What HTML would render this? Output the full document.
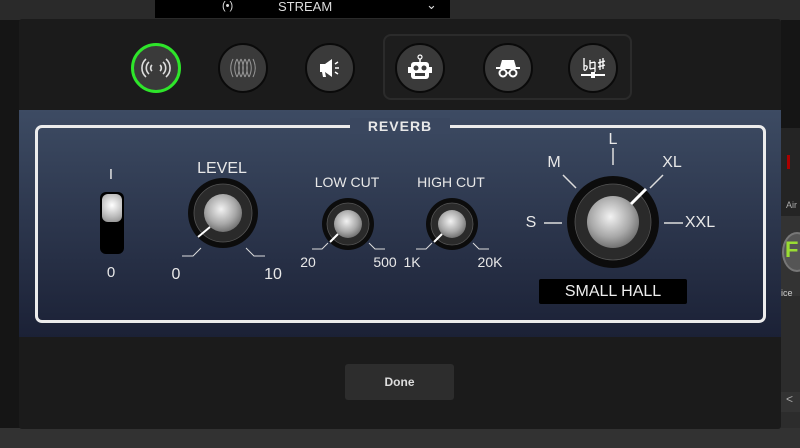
<!DOCTYPE html>
<html><head><meta charset="utf-8"><style>
*{margin:0;padding:0;box-sizing:border-box}
body{width:800px;height:448px;overflow:hidden;background:#2c2c2c;font-family:"Liberation Sans",sans-serif;position:relative}
.a{position:absolute}
.t{position:absolute;color:#e8e8e8;font-size:15px;transform:translateX(-50%);white-space:nowrap}
.btn{position:absolute;width:50px;height:50px;border-radius:50%;background:#3a3a3a;border:2px solid #0a0a0a;transform:translate(-50%,-50%);display:flex;align-items:center;justify-content:center}
</style></head><body>
<div class="a" style="left:0;top:0;width:800px;height:20px;background:#2a2a2a"></div>
<div class="a" style="left:0;top:20px;width:20px;height:410px;background:#151515"></div>
<div class="a" style="left:0;top:428px;width:800px;height:20px;background:#323232"></div>
<div class="a" style="left:155px;top:0;width:295px;height:18px;background:#000"></div>
<div class="a" style="left:222px;top:0;color:#ddd;font-size:11px">(•)</div>
<div class="a" style="left:278px;top:-1px;color:#ddd;font-size:13px">STREAM</div>
<div class="a" style="left:426px;top:-3px;color:#ddd;font-size:13px">⌄</div>
<div class="a" style="left:781px;top:20px;width:19px;height:108px;background:#151515"></div>
<div class="a" style="left:781px;top:128px;width:19px;height:88px;background:#242424"></div>
<div class="a" style="left:787px;top:155px;width:3px;height:14px;background:#a00"></div>
<div class="a" style="left:786px;top:200px;color:#aaa;font-size:9px">Air</div>
<div class="a" style="left:781px;top:216px;width:19px;height:80px;background:#333"></div>
<div class="a" style="left:782px;top:232px;width:30px;height:40px;border-radius:50%;background:#555;border:2px solid #777"></div>
<div class="a" style="left:785px;top:237px;color:#9d3;font-weight:bold;font-size:22px">F</div>
<div class="a" style="left:781px;top:288px;color:#ccc;font-size:9px">ice</div>
<div class="a" style="left:781px;top:392px;width:19px;height:20px;background:#333;color:#aaa;font-size:12px;padding-left:5px">&lt;</div>

<div class="a" style="left:19px;top:19px;width:762px;height:410px;background:#1b1b1b;border-radius:3px"></div>

<div class="a" style="left:383px;top:34px;width:249px;height:66px;border:2px solid #2b2b2b;border-radius:8px;background:#1d1d1d"></div>
<div class="btn" style="left:156px;top:68px;border:3px solid #2ee52a">
<svg width="30" height="24" viewBox="0 0 30 24" fill="none" stroke="#ddd" stroke-width="1.6"><path d="M11 9a4 4 0 0 0 0 6M19 9a4 4 0 0 1 0 6M8 6a8 8 0 0 0 0 12M22 6a8 8 0 0 1 0 12M5 3a12 12 0 0 0 0 18M25 3a12 12 0 0 1 0 18"/></svg></div>
<div class="btn" style="left:243px;top:68px">
<svg width="28" height="24" viewBox="0 0 28 24" fill="none" stroke="#999" stroke-width="1"><path d="M4 3c-3 6-3 12 0 18M8 3c-3 6-3 12 0 18M12 3c-3 6-3 12 0 18M16 3c-3 6-3 12 0 18M20 3c-3 6-3 12 0 18M8 3c3 6 3 12 0 18M12 3c3 6 3 12 0 18M16 3c3 6 3 12 0 18M20 3c3 6 3 12 0 18M24 3c3 6 3 12 0 18"/></svg></div>
<div class="btn" style="left:330px;top:68px">
<svg width="26" height="24" viewBox="0 0 26 24"><path d="M3 8h5l7-5v18l-7-5H3z M5 16h3l1 5H6z" fill="#fff"/><path d="M18 8l3-2M18 12h4M18 16l3 2" stroke="#fff" stroke-width="1.5"/></svg></div>
<div class="btn" style="left:420px;top:68px">
<svg width="26" height="28" viewBox="0 0 26 28"><circle cx="13" cy="3" r="2" fill="none" stroke="#fff" stroke-width="1.2"/><path d="M13 5v3" stroke="#fff" stroke-width="1.5"/><rect x="4" y="8" width="18" height="17" rx="3" fill="#fff"/><rect x="1" y="13" width="3" height="6" fill="#fff"/><rect x="22" y="13" width="3" height="6" fill="#fff"/><circle cx="9" cy="14" r="2.5" fill="#3a3a3a"/><circle cx="17" cy="14" r="2.5" fill="#3a3a3a"/><rect x="8" y="19" width="10" height="3" fill="#3a3a3a"/></svg></div>
<div class="btn" style="left:508px;top:68px">
<svg width="28" height="20" viewBox="0 0 28 20"><path d="M8 2h12l2 7H6z" fill="#fff"/><rect x="2" y="9" width="24" height="2" fill="#fff"/><circle cx="9" cy="15" r="3.5" fill="none" stroke="#fff" stroke-width="2"/><circle cx="19" cy="15" r="3.5" fill="none" stroke="#fff" stroke-width="2"/><path d="M12 15h4" stroke="#fff" stroke-width="1.5"/></svg></div>
<div class="btn" style="left:593px;top:68px">
<svg width="28" height="24" viewBox="0 0 28 24" fill="none" stroke="#fff" stroke-width="1.3"><path d="M5 2v12M5 10q4-1 3 2t-3 2M11 4v9M16 6v10M11 13l5-1M11 7l5-1M21 3v11M24 2v11M19 7l7-2M19 11l7-2"/><path d="M2 19h24" stroke-width="2"/><rect x="12" y="16" width="4" height="6" fill="#fff" stroke="none"/></svg></div>

<div class="a" style="left:19px;top:110px;width:762px;height:227px;background:linear-gradient(#3d4b63,#1b2136)"></div>
<div class="a" style="left:35px;top:125px;width:731px;height:198px;border:3.5px solid #ececec;border-radius:7px"></div>
<div class="a" style="left:350px;top:118px;width:100px;height:16px;background:#3a475f"></div>
<div class="t" style="left:400px;top:118px;font-weight:bold;font-size:14px;letter-spacing:1px">REVERB</div>

<div class="t" style="left:111px;top:166px">I</div>
<div class="a" style="left:100px;top:192px;width:24px;height:62px;background:#000;border-radius:6px"></div>
<div class="a" style="left:102px;top:194px;width:20px;height:28px;border-radius:6px;background:radial-gradient(circle at 50% 40%,#fff,#bbb 60%,#888)"></div>
<div class="t" style="left:111px;top:264px">0</div>

<svg class="a" style="left:0;top:0" width="800" height="448">
<defs>
<radialGradient id="s" cx="45%" cy="40%" r="65%"><stop offset="0" stop-color="#f2f2f2"/><stop offset=".6" stop-color="#a8a8a8"/><stop offset="1" stop-color="#666"/></radialGradient>
</defs>
<g stroke="#ddd" stroke-width="1" fill="none">
<path d="M182 256h11l8-8M265 256h-11l-8-8"/>
<path d="M312 249h10l6-6M385 249h-10l-6-6"/>
<path d="M416 249h10l6-6M489 249h-10l-6-6"/>
<path d="M613 148v17M563 175l13 13M544 223h18M664 223h19M663 175l-13 13" stroke-width="1.5"/>
</g>
<circle cx="223" cy="213" r="35" fill="#0c0c0c"/><circle cx="223" cy="213" r="29" fill="#2a2a2a" stroke="#555" stroke-width=".8"/><circle cx="223" cy="213" r="19" fill="url(#s)"/>
<path d="M210 227l-12 10" stroke="#fff" stroke-width="2"/>
<circle cx="348" cy="224" r="26" fill="#0c0c0c"/><circle cx="348" cy="224" r="21" fill="#2a2a2a" stroke="#555" stroke-width=".8"/><circle cx="348" cy="224" r="14" fill="url(#s)"/>
<path d="M338 234l-8 8" stroke="#fff" stroke-width="2"/>
<circle cx="452" cy="224" r="26" fill="#0c0c0c"/><circle cx="452" cy="224" r="21" fill="#2a2a2a" stroke="#555" stroke-width=".8"/><circle cx="452" cy="224" r="14" fill="url(#s)"/>
<path d="M442 234l-8 8" stroke="#fff" stroke-width="2"/>
<circle cx="613" cy="222" r="46" fill="#0c0c0c"/><circle cx="613" cy="222" r="38" fill="#2a2a2a" stroke="#555" stroke-width=".8"/><circle cx="613" cy="222" r="26" fill="url(#s)"/>
<path d="M631 204l15-15" stroke="#fff" stroke-width="3"/>
</svg>

<div class="t" style="left:222px;top:160px;font-size:16px">LEVEL</div>
<div class="t" style="left:176px;top:266px;font-size:16px">0</div>
<div class="t" style="left:273px;top:266px;font-size:16px">10</div>
<div class="t" style="left:347px;top:174px;font-size:14px">LOW CUT</div>
<div class="t" style="left:308px;top:254px;font-size:14px">20</div>
<div class="t" style="left:385px;top:254px;font-size:14px">500</div>
<div class="t" style="left:451px;top:174px;font-size:14px">HIGH CUT</div>
<div class="t" style="left:412px;top:254px;font-size:14px">1K</div>
<div class="t" style="left:490px;top:254px;font-size:14px">20K</div>
<div class="t" style="left:613px;top:131px;font-size:16px">L</div>
<div class="t" style="left:554px;top:154px;font-size:16px">M</div>
<div class="t" style="left:672px;top:154px;font-size:16px">XL</div>
<div class="t" style="left:531px;top:214px;font-size:16px">S</div>
<div class="t" style="left:700px;top:214px;font-size:16px">XXL</div>
<div class="a" style="left:539px;top:279px;width:148px;height:25px;background:#000;border-radius:2px;color:#eee;font-size:16px;text-align:center;line-height:25px">SMALL HALL</div>

<div class="a" style="left:345px;top:364px;width:109px;height:36px;background:#2d2d2d;border-radius:3px;color:#ddd;font-size:12px;font-weight:bold;text-align:center;line-height:36px">Done</div>
</body></html>
